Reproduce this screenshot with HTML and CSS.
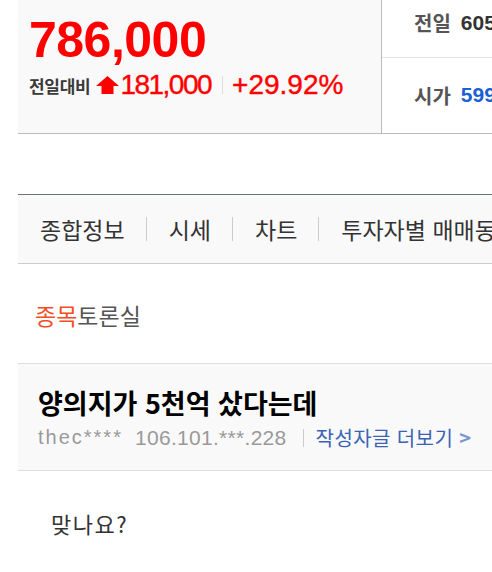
FILE: index.html
```html
<!DOCTYPE html>
<html lang="ko">
<head>
  <meta charset="UTF-8">
  <title>종목토론실</title>
  <link rel="stylesheet" href="styles.css">
</head>
<body>

  <div class="page">

    <div class="rate-box">
      <div class="today">
        <div class="now-price">786,000</div>
        <div class="change">
          <span class="change-label">전일대비</span>
          <svg class="up-icon" width="23" height="18" viewBox="0 0 23 18">
            <polygon points="11.5,0 23,10 17.5,10 17.5,18 5.5,18 5.5,10 0,10" fill="#f00"/>
          </svg>
          <span class="change-num narrow">181,000</span>
          <span class="change-bar"></span>
          <span class="change-num">+29.92%</span>
        </div>
      </div>
      <div class="summary">
        <div class="summary-row first">
          <span class="summary-label">전일</span>
          <span class="summary-value">605,000</span>
        </div>
        <div class="summary-row">
          <span class="summary-label">시가</span>
          <span class="summary-value blue">599,000</span>
        </div>
      </div>
    </div>

    <ul class="tabs">
      <li>종합정보</li>
      <li>시세</li>
      <li>차트</li>
      <li>투자자별 매매동향</li>
      <li>뉴스·공시</li>
    </ul>

    <h2 class="board-title"><span class="accent">종목</span>토론실</h2>

    <div class="post-head">
      <div class="post-subject">양의지가 5천억 샀다는데</div>
      <div class="post-meta">
        <span class="writer">thec****</span>
        <span class="ip">106.101.***.228</span>
        <span class="meta-bar"></span>
        <a class="more-link" href="#">작성자글 더보기 <span class="arrow">&gt;</span></a>
      </div>
    </div>

    <div class="post-body">맞나요?</div>

  </div>

</body>
</html>
```

FILE: styles.css
```css
body {
  margin: 0;
  overflow: hidden;
  background: #fff;
  font-family: "Noto Sans CJK KR", "Liberation Sans", sans-serif;
  color: #333;
}

.page {
  width: 900px;
  padding-left: 18px;
}

/* 시세 박스 */
.rate-box {
  display: flex;
  height: 133px;
  border-bottom: 1px solid #bbb;
}

.today {
  width: 364px;
  background: #f9f9f9;
  border-right: 1px solid #bbb;
  padding: 12px 0 0 11px;
  box-sizing: border-box;
}

.now-price {
  font-family: "Liberation Sans", Arial, sans-serif;
  font-size: 50px;
  font-weight: bold;
  letter-spacing: -0.5px;
  color: #f00;
  line-height: 56px;
}

.change {
  display: flex;
  align-items: center;
  margin-top: 1px;
  height: 32px;
}

.change-label {
  font-size: 17px;
  font-weight: bold;
  color: #3a3a3a;
  letter-spacing: -0.3px;
  margin-right: 6px;
}

.up-icon {
  margin-right: 1px;
}

.change-num {
  font-family: "Liberation Sans", Arial, sans-serif;
  font-size: 28px;
  color: #f00;
  -webkit-text-stroke: 0.4px #f00;
}

.change-num.narrow {
  letter-spacing: -1.5px;
}

.change-bar {
  width: 1px;
  height: 18px;
  background: #ddd;
  margin: 0 9px 0 11px;
}

.summary {
  flex: 1;
}

.summary-row {
  height: 74px;
  display: flex;
  align-items: center;
  padding-left: 32px;
}

.summary-row.first {
  height: 58px;
  padding-bottom: 12px;
  box-sizing: border-box;
  border-bottom: 1px solid #e5e5e5;
}

.summary-label {
  font-size: 20px;
  font-weight: bold;
  color: #555;
  margin-right: 10px;
}

.summary-value {
  font-family: "Liberation Sans", Arial, sans-serif;
  font-size: 21px;
  font-weight: bold;
  color: #333;
}

.summary-value.blue {
  color: #1a5fd6;
}

/* 탭 */
.tabs {
  display: flex;
  align-items: center;
  margin: 60px 0 0;
  padding: 0 0 0 22px;
  list-style: none;
  height: 68px;
  background: #f9f9f9;
  border-top: 1px solid #6b7178;
  border-bottom: 1px solid #ccc;
}

.tabs li {
  font-size: 23px;
  color: #333;
  white-space: nowrap;
  padding-right: 21px;
  margin-right: 22px;
  border-right: 1px solid #ccc;
  line-height: 24px;
}

/* 게시판 */
.board-title {
  margin: 0;
  padding: 37px 0 0 17px;
  height: 62px;
  font-size: 23px;
  font-weight: normal;
  color: #555;
  line-height: 28px;
  box-sizing: content-box;
}

.accent {
  color: #f04e23;
}

.post-head {
  background: #f9f9f9;
  border-top: 1px solid #ddd;
  border-bottom: 1px solid #ddd;
  height: 108px;
  padding: 22px 0 0 20px;
  box-sizing: border-box;
}

.post-subject {
  font-size: 27px;
  font-weight: bold;
  color: #000;
  line-height: 34px;
}

.post-meta {
  display: flex;
  align-items: center;
  margin-top: 3px;
  font-size: 20px;
  color: #999;
  white-space: nowrap;
}

.writer {
  font-family: "Liberation Sans", Arial, sans-serif;
  letter-spacing: 2px;
  margin-right: 12px;
}

.ip {
  font-family: "Liberation Sans", Arial, sans-serif;
  font-size: 21px;
  letter-spacing: 0.3px;
}

.meta-bar {
  width: 1px;
  height: 18px;
  background: #ccc;
  margin: 0 12px 0 16px;
}

.more-link {
  color: #3a63b5;
  text-decoration: none;
  letter-spacing: 0.4px;
}

.more-link .arrow {
  color: #7a96d0;
  font-weight: bold;
  font-size: 20px;
}

.post-body {
  padding: 36px 0 0 33px;
  font-size: 22px;
  letter-spacing: 1.5px;
  color: #333;
}
```
